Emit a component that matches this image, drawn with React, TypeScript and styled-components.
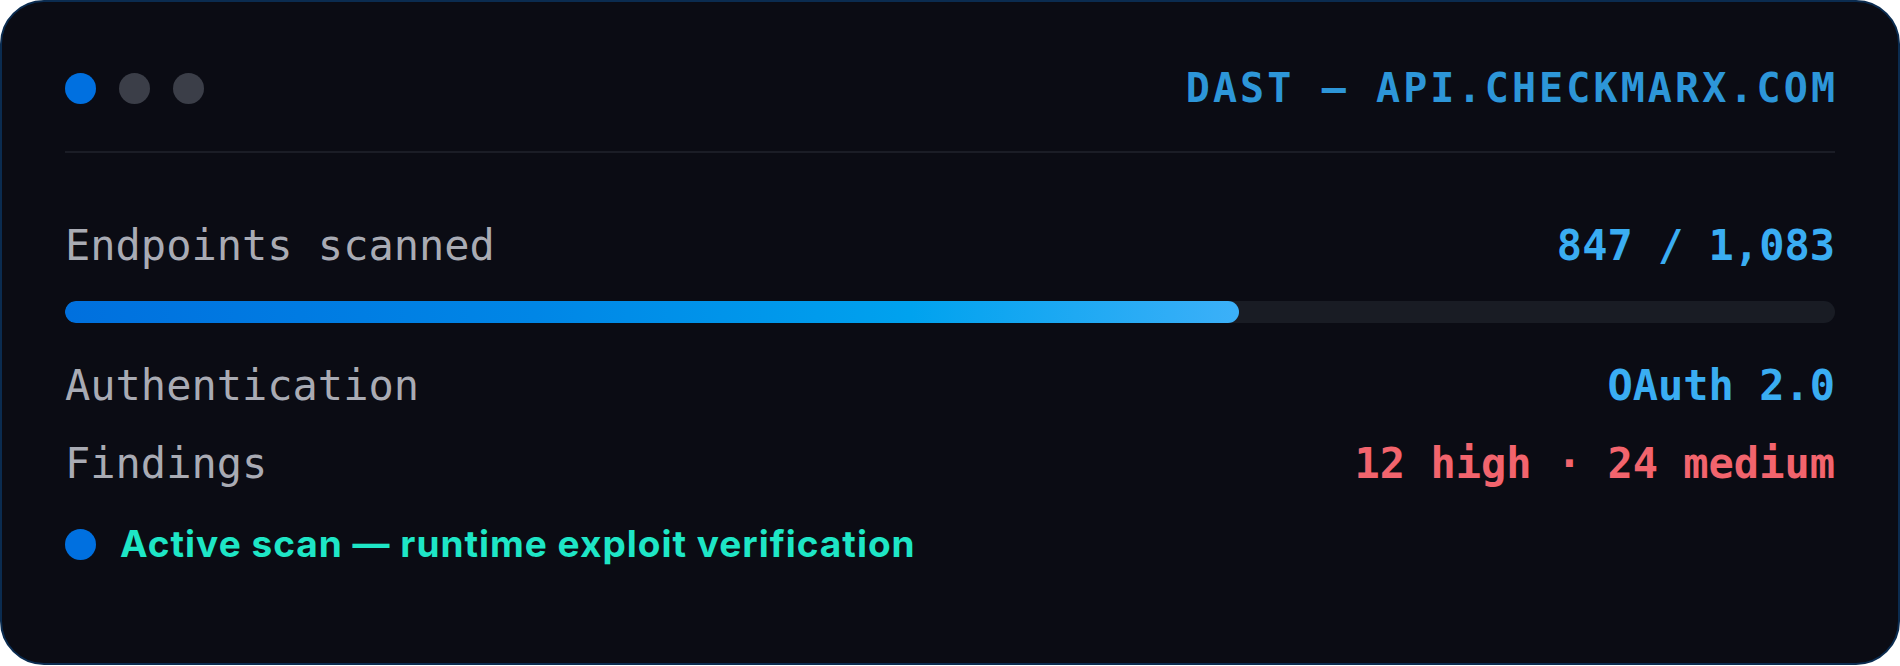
import React from "react";
import styled, { createGlobalStyle } from "styled-components";

const Global = createGlobalStyle`
  html, body { margin: 0; padding: 0; background: #ffffff; }
  * { box-sizing: border-box; }
`;

const Card = styled.div`
  width: 1900px;
  height: 665px;
  background: #0b0c14;
  border: 2px solid #0b2c50;
  border-radius: 44px;
  padding: 62px 63px 0 63px;
  display: flex;
  flex-direction: column;
  font-family: "DejaVu Sans Mono", "Liberation Mono", monospace;
`;

const Header = styled.div`
  height: 48px;
  display: flex;
  align-items: center;
  justify-content: space-between;
`;

const Dots = styled.div`
  display: flex;
  gap: 23px;
`;

const Dot = styled.span<{ $color: string }>`
  width: 31px;
  height: 31px;
  border-radius: 50%;
  background: ${(p) => p.$color};
  flex: none;
`;

const Title = styled.div`
  font-size: 40px;
  line-height: 48px;
  font-weight: 700;
  letter-spacing: 3.1px;
  margin-right: -3.1px;
  color: #2d96d8;
`;

const Divider = styled.div`
  height: 2px;
  margin-top: 39px;
  background: #1b1d26;
`;

const Row = styled.div<{ $mt: number }>`
  display: flex;
  justify-content: space-between;
  align-items: baseline;
  margin-top: ${(p) => p.$mt}px;
  font-size: 42px;
  line-height: 50px;
`;

const Label = styled.span`
  color: #a9abb4;
  font-weight: 400;
`;

const Value = styled.span<{ $tone: "blue" | "red" }>`
  font-weight: 700;
  color: ${(p) => (p.$tone === "red" ? "#f2646d" : "#3aadf2")};
`;

const Track = styled.div`
  margin-top: 30px;
  height: 22px;
  border-radius: 11px;
  background: #191c24;
  overflow: hidden;
`;

const Fill = styled.div`
  height: 100%;
  border-radius: 11px;
  background: linear-gradient(90deg, #0070de 0%, #0086e6 40%, #00a2ee 72%, #3cb0f8 100%);
`;

const Status = styled.div`
  display: flex;
  align-items: center;
  gap: 24px;
  margin-top: 31px;
  height: 48px;
`;

const StatusText = styled.span`
  font-family: Inter, "Noto Sans", sans-serif;
  font-weight: 700;
  font-size: 37px;
  line-height: 48px;
  letter-spacing: 1px;
  color: #1ee6c6;
`;

export default function App() {
  const pct = 66.3;
  return (
    <>
      <Global />
      <Card>
        <Header>
          <Dots>
            <Dot $color="#0070e0" />
            <Dot $color="#3b3e48" />
            <Dot $color="#3b3e48" />
          </Dots>
          <Title>DAST — API.CHECKMARX.COM</Title>
        </Header>
        <Divider />
        <Row $mt={68}>
          <Label>Endpoints scanned</Label>
          <Value $tone="blue">847 / 1,083</Value>
        </Row>
        <Track>
          <Fill style={{ width: `${pct}%` }} />
        </Track>
        <Row $mt={38}>
          <Label>Authentication</Label>
          <Value $tone="blue">OAuth 2.0</Value>
        </Row>
        <Row $mt={28}>
          <Label>Findings</Label>
          <Value $tone="red">12 high · 24 medium</Value>
        </Row>
        <Status>
          <Dot $color="#0070e0" />
          <StatusText>Active scan — runtime exploit verification</StatusText>
        </Status>
      </Card>
    </>
  );
}
